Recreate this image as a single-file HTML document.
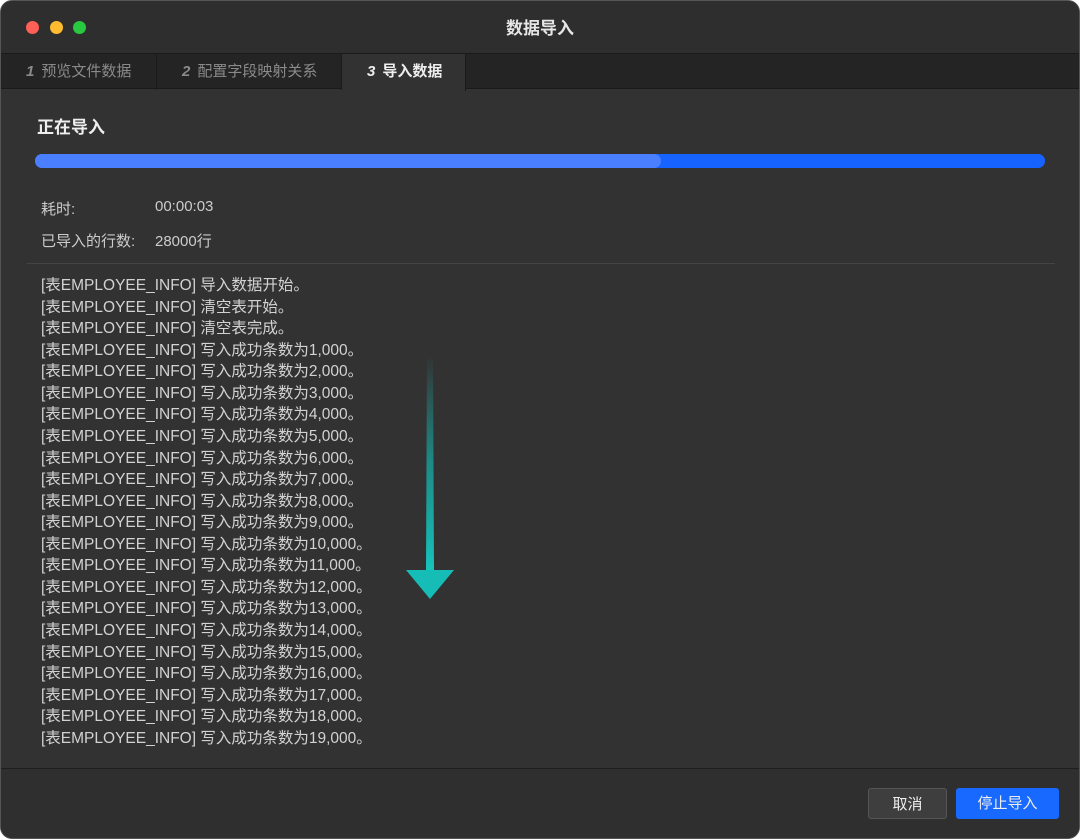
<!DOCTYPE html>
<html><head><meta charset="utf-8"><style>
body{margin:0;background:#fff;width:1080px;height:839px;overflow:hidden;font-family:"Liberation Sans","Noto Sans CJK SC",sans-serif;}
.win{position:absolute;left:0;top:0;width:1080px;height:839px;background:#323232;border-radius:12px;overflow:hidden;border:1px solid #555;box-sizing:border-box}
.title{height:52px;background:#2e2e2e;position:relative;color:#e6e6e6;font-size:17px;font-weight:bold;text-align:center;line-height:56px}
.dot{position:absolute;top:20px;width:13px;height:13px;border-radius:50%}
.tabs{position:absolute;top:52px;left:0;right:0;height:36px;background:#242424;border-top:1px solid #1a1a1a;border-bottom:1px solid #1a1a1a;box-sizing:border-box}
.tab{position:absolute;top:0;height:36px;line-height:36px;font-size:15px;color:#8a8a8a;border-right:1px solid #1a1a1a;box-sizing:border-box;padding-left:25px}
.tab i{font-weight:bold;margin-right:7px}
.tab.act{background:#323232;color:#eee;height:37px;font-weight:bold}
.h{position:absolute;left:36px;top:112px;color:#eee;font-size:17px;font-weight:bold}
.bar{position:absolute;left:34px;top:153px;width:1010px;height:14px;border-radius:7px;background:#1763ff}
.bar div{width:626px;height:14px;border-radius:7px;background:#4a7fff}
.lbl{position:absolute;font-size:15px;color:#ccc}
.sep{position:absolute;left:26px;width:1028px;height:1px;background:#444}
.log{position:absolute;left:40px;top:274px;font-size:15.5px;line-height:21.57px;color:#d2d2d2;white-space:pre}
.foot{position:absolute;left:0;right:0;top:767px;bottom:0;background:#2f2f2f;border-top:1px solid #1e1e1e}
.btn{position:absolute;top:787px;height:31px;line-height:31px;text-align:center;font-size:15px;color:#eee;border-radius:3px}
</style></head><body>
<div class="win">
<div class="title">数据导入
<div class="dot" style="left:25px;background:#fe5f57"></div>
<div class="dot" style="left:49px;background:#febc2e"></div>
<div class="dot" style="left:72px;background:#28c840"></div>
</div>
<div class="tabs">
<div class="tab" style="left:0;width:156px"><i>1</i>预览文件数据</div>
<div class="tab" style="left:156px;width:185px"><i>2</i>配置字段映射关系</div>
<div class="tab act" style="left:341px;width:124px"><i>3</i>导入数据</div>
</div>
<div class="h">正在导入</div>
<div class="bar"><div></div></div>
<div class="lbl" style="left:40px;top:197px">耗时:</div>
<div class="lbl" style="left:154px;top:197px">00:00:03</div>
<div class="lbl" style="left:40px;top:229px">已导入的行数:</div>
<div class="lbl" style="left:154px;top:229px">28000行</div>
<div class="sep" style="top:262px"></div>
<div class="log">[表EMPLOYEE_INFO] 导入数据开始。
[表EMPLOYEE_INFO] 清空表开始。
[表EMPLOYEE_INFO] 清空表完成。
[表EMPLOYEE_INFO] 写入成功条数为1,000。
[表EMPLOYEE_INFO] 写入成功条数为2,000。
[表EMPLOYEE_INFO] 写入成功条数为3,000。
[表EMPLOYEE_INFO] 写入成功条数为4,000。
[表EMPLOYEE_INFO] 写入成功条数为5,000。
[表EMPLOYEE_INFO] 写入成功条数为6,000。
[表EMPLOYEE_INFO] 写入成功条数为7,000。
[表EMPLOYEE_INFO] 写入成功条数为8,000。
[表EMPLOYEE_INFO] 写入成功条数为9,000。
[表EMPLOYEE_INFO] 写入成功条数为10,000。
[表EMPLOYEE_INFO] 写入成功条数为11,000。
[表EMPLOYEE_INFO] 写入成功条数为12,000。
[表EMPLOYEE_INFO] 写入成功条数为13,000。
[表EMPLOYEE_INFO] 写入成功条数为14,000。
[表EMPLOYEE_INFO] 写入成功条数为15,000。
[表EMPLOYEE_INFO] 写入成功条数为16,000。
[表EMPLOYEE_INFO] 写入成功条数为17,000。
[表EMPLOYEE_INFO] 写入成功条数为18,000。
[表EMPLOYEE_INFO] 写入成功条数为19,000。</div>
<svg style="position:absolute;left:400px;top:350px" width="60" height="250">
<defs><linearGradient id="g" x1="0" y1="0" x2="0" y2="1"><stop offset="0" stop-color="#14b8b0" stop-opacity="0"/><stop offset="0.5" stop-color="#14b0aa" stop-opacity="0.7"/><stop offset="1" stop-color="#16c4bc"/></linearGradient></defs>
<path d="M26 5 L32 5 L33 220 L25 220 Z" fill="url(#g)"/>
<path d="M5 219 L53 219 L29 248 Z" fill="#16bdb6"/>
</svg>
<div class="foot"></div>
<div class="btn" style="left:867px;width:79px;background:#3e3e3e;border:1px solid #555;box-sizing:border-box">取消</div>
<div class="btn" style="left:955px;width:103px;background:#1769ff">停止导入</div>
</div>
</body></html>
